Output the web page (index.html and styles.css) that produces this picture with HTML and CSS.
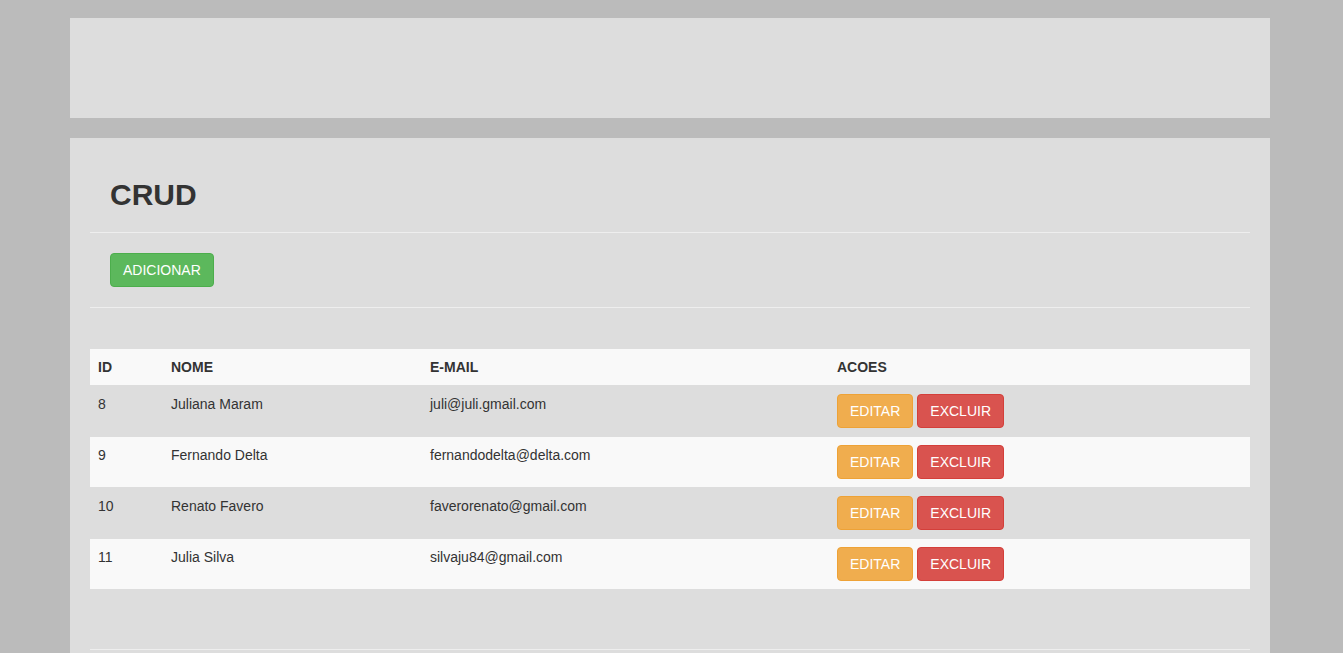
FILE: index.html
```html
<!DOCTYPE html>
<html lang="pt">
<head>
<meta charset="utf-8">
<title>CRUD</title>
<link rel="stylesheet" href="styles.css">
</head>
<body>
<div class="page">
  <header class="topbar"></header>
  <main class="panel">
    <div class="panel-head">
      <h2 class="title">CRUD</h2>
    </div>
    <div class="panel-actions">
      <button class="btn btn-success">ADICIONAR</button>
    </div>
    <div class="panel-body">
      <table class="grid">
        <thead>
          <tr class="row-light">
            <th class="c-id">ID</th>
            <th class="c-nome">NOME</th>
            <th class="c-mail">E-MAIL</th>
            <th class="c-acoes">ACOES</th>
          </tr>
        </thead>
        <tbody>
          <tr>
            <td>8</td>
            <td>Juliana Maram</td>
            <td>juli@juli.gmail.com</td>
            <td class="actions"><button class="btn btn-warning">EDITAR</button><button class="btn btn-danger">EXCLUIR</button></td>
          </tr>
          <tr class="row-light">
            <td>9</td>
            <td>Fernando Delta</td>
            <td>fernandodelta@delta.com</td>
            <td class="actions"><button class="btn btn-warning">EDITAR</button><button class="btn btn-danger">EXCLUIR</button></td>
          </tr>
          <tr>
            <td>10</td>
            <td>Renato Favero</td>
            <td>faverorenato@gmail.com</td>
            <td class="actions"><button class="btn btn-warning">EDITAR</button><button class="btn btn-danger">EXCLUIR</button></td>
          </tr>
          <tr class="row-light">
            <td>11</td>
            <td>Julia Silva</td>
            <td>silvaju84@gmail.com</td>
            <td class="actions"><button class="btn btn-warning">EDITAR</button><button class="btn btn-danger">EXCLUIR</button></td>
          </tr>
        </tbody>
      </table>
    </div>
    <div class="panel-foot"></div>
  </main>
</div>
</body>
</html>
```
FILE: styles.css
```css
* { box-sizing: border-box; }
html, body { margin: 0; padding: 0; }
body {
  background: #bbbbbb;
  font-family: "Liberation Sans", Arial, Helvetica, sans-serif;
  font-size: 14px;
  line-height: 20px;
  color: #333333;
  overflow: hidden;
  padding-right: 3px;
}
.page {
  width: 1200px;
  margin: 0 auto;
  padding-top: 18px;
  display: flex;
  flex-direction: column;
  gap: 20px;
}
.topbar {
  height: 100px;
  background: #dddddd;
}
.panel {
  background: #dddddd;
  padding: 20px 20px 40px;
}
.panel-head {
  padding: 20px 20px 21px;
  border-bottom: 1px solid #eeeeee;
}
.title {
  margin: 0;
  font-size: 30px;
  line-height: 33px;
  font-weight: bold;
  color: #333333;
}
.panel-actions {
  padding: 20px 20px;
  border-bottom: 1px solid #eeeeee;
}
.panel-body {
  padding: 41px 0 60px;
  border-bottom: 1px solid #eeeeee;
}
.panel-foot { height: 20px; }
.grid {
  width: 100%;
  border-collapse: collapse;
  border-spacing: 0;
}
.grid th, .grid td {
  text-align: left;
  vertical-align: top;
  padding: 8px;
  line-height: 20px;
}
.grid th {
  font-weight: bold;
}
.grid tbody td {
  border-top: 1px solid #dddddd;
}
.row-light { background: #f9f9f9; }
.c-id { width: 73px; }
.c-nome { width: 259px; }
.c-mail { width: 407px; }
.actions {
  white-space: nowrap;
}
.actions .btn {
  vertical-align: top;
}
.actions .btn + .btn {
  margin-left: 4px;
}
.btn {
  display: inline-block;
  height: 34px;
  padding: 6px 12px;
  font-family: inherit;
  font-size: 14px;
  line-height: 20px;
  color: #ffffff;
  border: 1px solid transparent;
  border-radius: 4px;
  cursor: pointer;
  white-space: nowrap;
}
.btn-success { background: #5cb85c; border-color: #4cae4c; }
.btn-warning { background: #f0ad4e; border-color: #eea236; }
.btn-danger { background: #d9534f; border-color: #d43f3a; }
```
